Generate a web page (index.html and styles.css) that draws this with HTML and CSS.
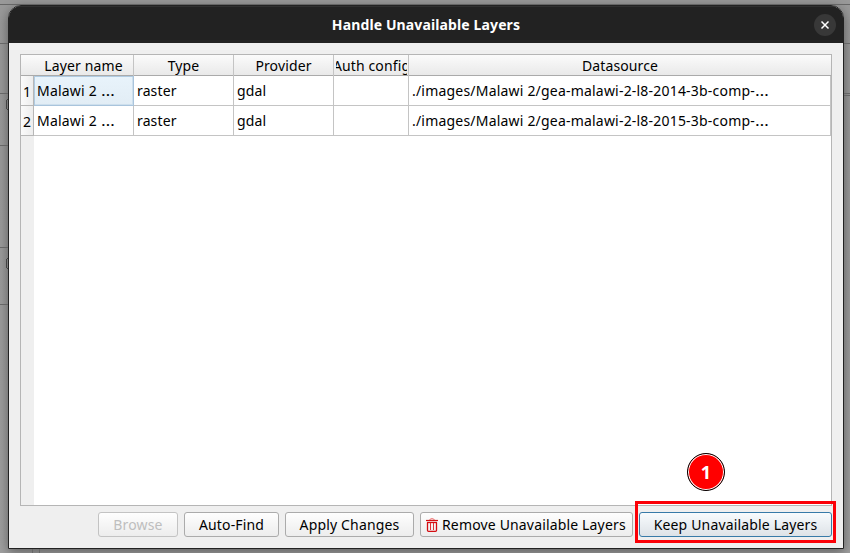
FILE: index.html
```html
<!DOCTYPE html>
<html lang="en">
<head>
<meta charset="utf-8">
<title>Handle Unavailable Layers</title>
<link rel="stylesheet" href="styles.css">
</head>
<body>
<svg class="backdrop" width="850" height="553" shape-rendering="crispEdges" aria-hidden="true">
  <path d="M0 4.500H850M0 43.500H9M0 93.500H9M0 145.500H9M0 247.500H9M0 304.500H9M843 43.500H850M843 93.500H850M843 95.500H850M32.500 548V553M39.500 548V553" fill="none" stroke="#666"/>
  <rect x="6.500" y="99.500" width="8" height="10" rx="2" fill="none" stroke="#444"/>
  <rect x="6.500" y="258.500" width="8" height="10" rx="2" fill="none" stroke="#444"/>
</svg>
<main class="window">
  <header class="titlebar">
    <h1>Handle Unavailable Layers</h1>
    <button class="close" aria-label="Close"><svg width="22" height="22" viewBox="0 0 22 22"><path d="M7.500 7.500l7 7M14.500 7.500l-7 7" stroke="#fff" stroke-width="1.500" fill="none"/></svg></button>
  </header>
  <section class="content">
    <div class="table">
      <div class="row head">
        <div class="corner"></div><div>Layer name</div><div>Type</div><div>Provider</div><div class="clip">Auth config</div><div>Datasource</div>
      </div>
      <div class="row">
        <div class="num">1</div><div class="selected name">Malawi 2 <span class="dots">…</span></div><div>raster</div><div>gdal</div><div></div><div class="path">./images/Malawi 2/gea-malawi-2-l8-2014-3b-comp-<span class="dots">…</span></div>
      </div>
      <div class="row">
        <div class="num">2</div><div class="name">Malawi 2 <span class="dots">…</span></div><div>raster</div><div>gdal</div><div></div><div class="path">./images/Malawi 2/gea-malawi-2-l8-2015-3b-comp-<span class="dots">…</span></div>
      </div>
      <div class="gutter"></div>
    </div>
    <footer class="actions">
      <button class="btn browse" disabled>Browse</button>
      <button class="btn auto">Auto-Find</button>
      <button class="btn apply">Apply Changes</button>
      <button class="btn remove"><svg width="12" height="14" viewBox="0 0 12 14" fill="none"><path d="M3.500 1.500Q6 -.3 8.500 1.500" stroke="#e66"/><path d="M0 2.500H12" stroke="#d40d12" stroke-width="1.200"/><path d="M1 4.500H11" stroke="#d40d12" stroke-width="1.300"/><path d="M1.500 4.500V12.500Q1.500 13.300 2.500 13.300H9.500Q10.500 13.300 10.500 12.500V4.500" stroke="#d40d12" stroke-width="1.300"/><path d="M4.500 5V12M7.500 5V12" stroke="#e03035"/></svg><span>Remove Unavailable Layers</span></button>
      <button class="btn keep">Keep Unavailable Layers</button>
    </footer>
  </section>
</main>
<div class="highlight"></div>
<div class="step"><span>1</span></div>
</body>
</html>
```
FILE: styles.css
```css
* { box-sizing: border-box; }
body {
  margin: 0; width: 850px; height: 553px; overflow: hidden; position: relative;
  padding: 5px 6px 4px 8px;
  background: linear-gradient(#999, #a0a0a0);
  font: 14px/20px "Noto Sans", sans-serif; color: #000;
}
.backdrop { position: absolute; left: 0; top: 0; }
.window {
  position: relative; width: 836px; height: 544px; display: flex; flex-direction: column;
  border: 1px solid #222; border-radius: 13px 13px 0 0; background: #efefef; overflow: hidden;
}
body::before {
  content: ""; position: absolute; left: 8px; top: 5px; width: 836px; height: 544px;
  border-radius: 13px 13px 0 0; box-shadow: 0 3px 12px rgba(0,0,0,.42);
}
.titlebar {
  height: 37px; flex: none; background: #222; color: #fff; box-shadow: inset 0 1px #303030;
  display: grid; grid-template-columns: 1fr 22px; padding-right: 7px; align-items: center;
}
h1 { margin: 0; padding-left: 29px; font-size: 14px; line-height: 36px; font-weight: 700; letter-spacing: .12px; text-align: center; white-space: nowrap; }
.close { width: 22px; height: 22px; padding: 0; border: 0; border-radius: 50%; background: #383838; }
.close svg { display: block; }
.content { padding: 11px 11px 0; }
.table {
  width: 812px; height: 452px; border: 1px solid #b5b5b5; background: #fff;
  display: flex; flex-direction: column;
}
.row { display: grid; grid-template-columns: 13px 100px 100px 100px 75px 422px; height: 30px; flex: none; letter-spacing: .13px; }
.row > div { border-right: 1px solid #c4c4c4; border-bottom: 1px solid #c4c4c4; padding: 5px 0 0 3px; white-space: nowrap; overflow: hidden; }
.row.head { height: 21px; background: linear-gradient(#fbfbfb, #e9e9e9); border-bottom: 1px solid #aaa; }
.row.head > div { border-bottom: 0; padding: 1px 0 0; display: flex; justify-content: center; }
.row.head > .corner, .row.head > :last-child { border-right: 0; }
.row.head > .clip { padding: 1px 1px 0 2px; overflow: clip; overflow-clip-margin: content-box; }
.row > .num { padding: 6px 0 0 2px; background: linear-gradient(90deg, #fbfbfb, #ededed); border-color: #b7b7b7; }
.row > .name { letter-spacing: .2px; }
.row > .path { letter-spacing: .2px; }
.dots { display: inline-block; transform: scaleX(1.25); transform-origin: left; }
.row > .selected { background: linear-gradient(#e8f3fb, #e2edf5); border-color: #a9c4dc; box-shadow: inset 1px 1px #b0cbe1, inset -1px -1px #cddfed; }
.gutter { flex: 1; width: 13px; background: #efefef; }
.actions { display: flex; gap: 6px; justify-content: flex-end; padding-top: 6px; }
.btn {
  height: 25px; padding: 0; display: flex; align-items: center; justify-content: center;
  border: 1px solid #ababab; border-radius: 3px; background: linear-gradient(#fefefe, #ededed);
  font: inherit; letter-spacing: .16px; white-space: nowrap; color: #000;
}
.browse { width: 80px; color: #bebebe; border-color: #c3c3c3; }
.auto { width: 95px; }
.apply { width: 129px; }
.remove { width: 213px; justify-content: flex-start; padding-left: 5px; gap: 4px; }
.keep { width: 193px; border-color: #377aa8; background: linear-gradient(#f8fbfd, #dde2e7); }
.highlight { position: absolute; left: 635px; top: 501px; width: 201px; height: 42px; border: 3px solid #fb0007; }
.step {
  position: absolute; left: 687px; top: 453px; width: 38px; height: 38px; border: 1px solid #000; border-radius: 50%;
  background: #f00; box-shadow: inset 0 0 0 1px #fff; color: #fff;
  display: flex; align-items: center; justify-content: center; font: 700 18px "Noto Sans", sans-serif;
}
```
